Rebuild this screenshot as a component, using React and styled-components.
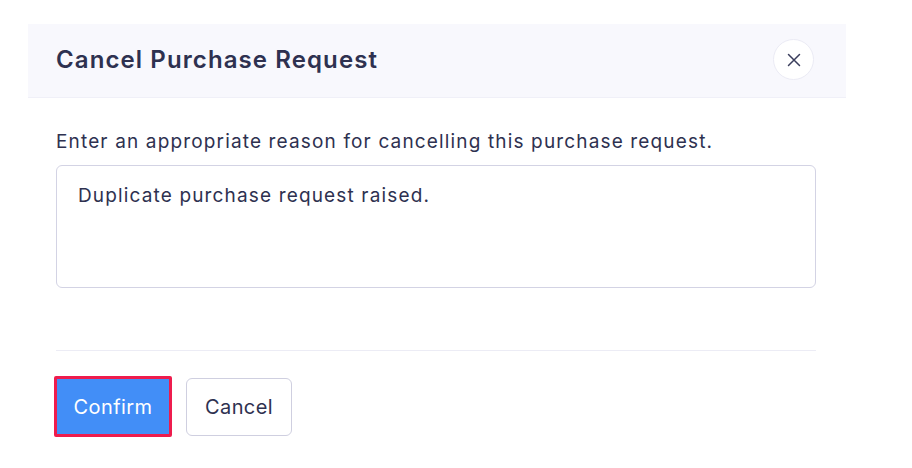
import React from "react";
import styled, { createGlobalStyle } from "styled-components";

const GlobalStyle = createGlobalStyle`
  body {
    margin: 0;
    background: #ffffff;
    font-family: Inter, "Noto Sans", sans-serif;
    color: #2e3150;
  }
`;

function CloseIcon() {
  return (
    <svg width="16" height="16" viewBox="0 0 16 16" fill="none">
      <path d="M2.5 2.5L13.5 13.5M13.5 2.5L2.5 13.5" stroke="#3a3d5c" strokeWidth="1.5" strokeLinecap="round" />
    </svg>
  );
}

export default function App() {
  return (
    <>
      <GlobalStyle />
      <Page>
        <Modal>
          <Header>
            <Title>Cancel Purchase Request</Title>
            <CloseButton aria-label="Close">
              <CloseIcon />
            </CloseButton>
          </Header>
          <Body>
            <Label>Enter an appropriate reason for cancelling this purchase request.</Label>
            <Reason defaultValue="Duplicate purchase request raised." />
          </Body>
          <Footer>
            <Button $primary>Confirm</Button>
            <Button>Cancel</Button>
          </Footer>
        </Modal>
      </Page>
    </>
  );
}

const Page = styled.div`
  padding: 24px 0 0 28px;
`;

const Modal = styled.div`
  width: 818px;
  background: #ffffff;
`;

const Header = styled.div`
  height: 74px;
  box-sizing: border-box;
  background: #f8f8fd;
  border-bottom: 1px solid #f0f0f8;
  display: flex;
  align-items: center;
  justify-content: space-between;
  padding: 0 32px 2px 28px;
`;

const Title = styled.h2`
  margin: 0;
  font-size: 24px;
  font-weight: 600;
  color: #2e3150;
  letter-spacing: 1.1px;
`;

const CloseButton = styled.button`
  width: 41px;
  height: 41px;
  border-radius: 50%;
  border: 1px solid #ebebf5;
  background: #ffffff;
  display: flex;
  align-items: center;
  justify-content: center;
  padding: 0;
  cursor: pointer;
`;

const Body = styled.div`
  padding: 33px 30px 0 28px;
  display: flex;
  flex-direction: column;
  gap: 12px;
`;

const Label = styled.div`
  font-size: 19px;
  line-height: 22px;
  letter-spacing: 1.15px;
  color: #2e3150;
`;

const Reason = styled.textarea`
  height: 123px;
  box-sizing: border-box;
  border: 1px solid #d3d3e4;
  border-radius: 6px;
  padding: 18px 21px;
  font-family: Inter, "Noto Sans", sans-serif;
  font-size: 19px;
  line-height: 24px;
  letter-spacing: 1.15px;
  color: #2e3150;
  resize: none;
  outline: none;
`;

const Footer = styled.div`
  margin: 62px 30px 0 28px;
  border-top: 1px solid #ececf5;
  padding-top: 25px;
  display: flex;
  align-items: center;
  gap: 14px;
`;

const Button = styled.button`
  box-sizing: border-box;
  height: ${(p) => (p.$primary ? "61px" : "58px")};
  width: ${(p) => (p.$primary ? "118px" : "106px")};
  padding: 0;
  margin-left: ${(p) => (p.$primary ? "-2px" : "0")};
  border-radius: ${(p) => (p.$primary ? "2px" : "6px")};
  border: ${(p) => (p.$primary ? "3px solid #ee1c4d" : "1px solid #cfcfe0")};
  background: ${(p) => (p.$primary ? "#428ef7" : "#ffffff")};
  color: ${(p) => (p.$primary ? "#ffffff" : "#2e3150")};
  font-family: Inter, "Noto Sans", sans-serif;
  font-size: 20px;
  letter-spacing: 0.4px;
  cursor: pointer;
`;
